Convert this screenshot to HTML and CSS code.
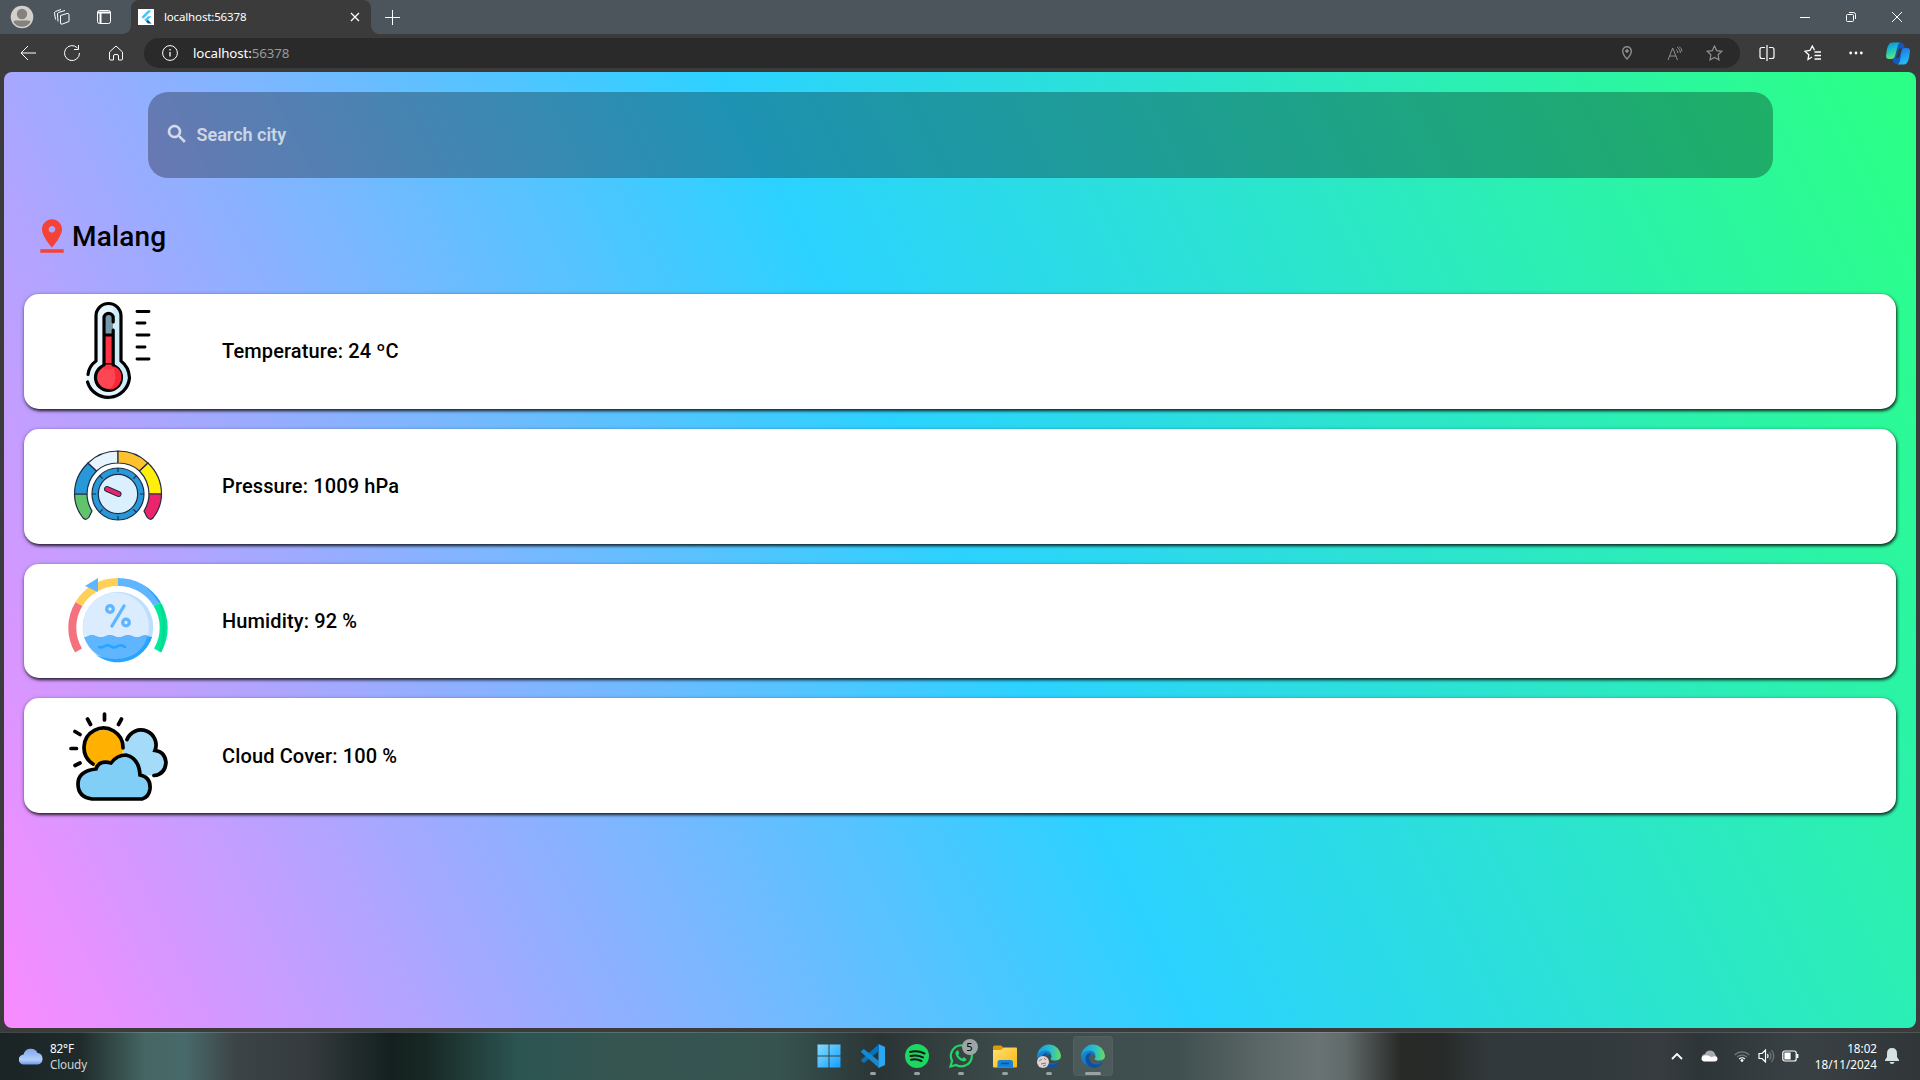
FILE: index.html
```html
<!DOCTYPE html>
<html lang="en">
<head>
<meta charset="utf-8">
<title>localhost:56378</title>
<link rel="stylesheet" href="styles.css">
</head>
<body>
<div class="titlebar">
  <div class="title-tools">
    <svg width="24" height="24" viewBox="0 0 24 24"><circle cx="12" cy="12" r="11.300" fill="#d3d0cc"/><circle cx="12" cy="9" r="5.200" fill="#86817d"/><path d="M3.500 17q0-1.500 2-1.500h13q2 0 2 1.500a10 10 0 0 1-17 0z" fill="#86817d"/></svg>
    <svg width="18" height="18" viewBox="0 0 18 18" class="line"><path d="M7.500 7.500 14 5.500q2-.5 2 1.200v6.800L9.500 16q-2 .7-2-1zM5 13.500 4.500 6q0-1 1-1.500L12 2.500M2.500 11.500 1.500 5q0-1 1-1.500L8 1.500"/></svg>
    <svg width="16" height="16" viewBox="0 0 16 16" class="line"><rect x="1.500" y="1.500" width="13" height="13" rx="2"/><path d="M1.500 3.500h13M4.500 4v10" stroke-width="2"/></svg>
  </div>
  <div class="tab">
    <svg width="16" height="16" viewBox="0 0 16 16"><path fill="#fff" d="M0 0h16v16H0z"/><path d="M3.500 8 10 1.500h3.500l-8.200 8.300zM10 7.200h3.500l-3.700 3.700-1.800-1.800z" fill="#43c4f7"/><path d="m6.200 10.800 1.800-1.800 1.800 1.800-1.800 1.800z" fill="#43c4f7"/><path d="m8 12.600 1.800-1.800 3.700 3.600H10z" fill="#075b9d"/></svg>
    <span>localhost:56378</span>
    <svg class="close line" width="10" height="10" viewBox="0 0 10 10"><path d="m1 1 8 8M9 1 1 9" stroke-width="1.300"/></svg>
  </div>
  <svg class="newtab line" width="15" height="15" viewBox="0 0 15 15"><path d="M7.500 0v15M0 7.500h15"/></svg>
  <div class="window-controls">
    <svg width="10" height="10" viewBox="0 0 10 10" class="line"><path d="M0 5.500h10"/></svg>
    <svg width="10" height="10" viewBox="0 0 10 10" class="line"><rect x=".5" y="2.500" width="7" height="7" rx="1"/><path d="M3 .5h4.500q2 0 2 2V7"/></svg>
    <svg width="10" height="10" viewBox="0 0 10 10" class="line"><path d="m0 0 10 10M10 0 0 10"/></svg>
  </div>
</div>
<div class="toolbar">
  <div class="nav">
    <svg width="16" height="16" viewBox="0 0 16 16" class="line"><path d="M16 8H1M8 1 1 8l7 7"/></svg>
    <svg width="18" height="18" viewBox="0 0 18 18" class="line"><path d="M14.500 4A7.500 7.500 0 1 0 16.500 9M15.500 1v4.500H11"/></svg>
    <svg width="16" height="16" viewBox="0 0 16 16" class="line"><path d="M1.500 7 8 1l6.500 6v7q0 1-1 1h-3v-4q0-1.500-1.500-1.500H7Q5.500 9.500 5.500 11v4h-3q-1 0-1-1z"/></svg>
  </div>
  <div class="address">
    <svg width="16" height="16" viewBox="0 0 16 16" class="line"><circle cx="8" cy="8" r="7.400"/><path d="M8 7v4.500M8 4v1.500" stroke-width="1.300"/></svg>
    <div class="url">localhost:<span>56378</span></div>
    <div class="address-actions">
      <svg width="10" height="14" viewBox="0 0 10 14" class="line dim"><path d="M5 13Q.7 8.500.7 5a4.300 4.300 0 0 1 8.600 0Q9.300 8.500 5 13z" stroke-width="1.400"/><circle cx="5" cy="5" r="1.300" fill="#8e8e8e"/></svg>
      <svg width="16" height="15" viewBox="0 0 16 15" class="line dim"><path d="m1 14 4.700-12L10.500 14M2.500 10H9M9 3.500q2 1 2 3.500M10 1q3.500 2 3.500 6M12 .5q3 2 3 5"/></svg>
      <svg width="17" height="16" viewBox="0 0 17 16" class="line dim"><path d="m8.500 1 2.200 4.600 5.100.7-3.700 3.500.9 5-4.500-2.400L4 14.800l.9-5L1.200 6.300l5.100-.7z" stroke-width="1.200"/></svg>
    </div>
  </div>
  <div class="browser-actions">
    <svg width="16" height="16" viewBox="0 0 16 16" class="line"><path d="M8 0v16M6 2.500H3q-2 0-2 2v7q0 2 2 2h3M10 2.500h3q2 0 2 2v7q0 2-2 2h-3" stroke-width="1.200"/></svg>
    <svg width="17" height="16" viewBox="0 0 17 16" class="line"><path d="m8 12-4 2.500.8-4.700L1 6.200l5-.7L8.300 1l2.200 4.300M10.500 7H17M10.500 10.500H17M10.500 14H17" stroke-width="1.300"/></svg>
    <svg width="14" height="4" viewBox="0 0 14 4" fill="#fff"><circle cx="1.700" cy="2" r="1.400"/><circle cx="7" cy="2" r="1.400"/><circle cx="12.300" cy="2" r="1.400"/></svg>
    <svg width="24" height="23" viewBox="0 0 24 23"><defs><linearGradient id="c1" x2=".3" y2="1"><stop stop-color="#1989cc"/><stop offset=".4" stop-color="#12b8d3"/><stop offset="1" stop-color="#62e47b"/></linearGradient><linearGradient id="c2" x2=".3" y2="1"><stop stop-color="#226be4"/><stop offset="1" stop-color="#22bcf5"/></linearGradient></defs><path d="M6 16q1 6 4.500 6h6L19 7q-1-6.500-4.500-6.500H9z" fill="#1558b6"/><path d="M6 .5h8.500q-2 0-3 4L9 14q-1 3-4 3H3q-3 0-3-3Q1 .5 6 .5z" fill="url(#c1)"/><path d="M18.500 6H21q3 0 3 3-1 13.500-6 13.500h-7q2 0 3-4L15.500 9q1-3 3-3z" fill="url(#c2)"/><path d="m10 16 3-9.500h3L13 16z" fill="#3a3a3a"/></svg>
  </div>
</div>
<main class="viewport">
  <div class="search">
    <svg width="24" height="24" viewBox="0 0 24 24" fill="currentColor" stroke="currentColor" stroke-width=".6"><path d="M15.500 14h-.79l-.28-.27A6.470 6.470 0 0 0 16 9.500 6.500 6.500 0 1 0 9.500 16c1.610 0 3.090-.59 4.230-1.570l.27.28v.79l5 4.990L20.490 19zm-6 0C7.010 14 5 11.990 5 9.500S7.010 5 9.500 5 14 7.010 14 9.500 11.990 14 9.500 14z"/></svg>
    <span>Search city</span>
  </div>
  <h1 class="city">
    <svg width="40" height="40" viewBox="0 0 24 24" fill="#f44336"><path d="M18 8c0-3.310-2.690-6-6-6S6 4.690 6 8c0 4.500 6 11 6 11s6-6.500 6-11zm-8 0c0-1.100.9-2 2-2s2 .9 2 2-.89 2-2 2a2 2 0 0 1-2-2zM5 20v2h14v-2z"/></svg>
    <span>Malang</span>
  </h1>
  <div class="cards">
    <section class="card">
      <svg width="100" height="100" viewBox="0 0 100 100" fill="none" stroke="#000" stroke-width="3.200" stroke-linecap="round">
        <path d="M27 60.500V15a13.300 13.300 0 0 1 26.600 0V60.500A21.500 21.500 0 1 1 27 60.500z" fill="#e6f5fe" stroke="none"/>
        <path d="M45 3q8 3 8 14v44q12 9 8 22-4 10-14 13 10-12 4-24l-5-8z" fill="#cdedfb" stroke="none"/>
        <path d="M20 73.500Q21 65 28 60V15a12.500 12.500 0 0 1 25 0v45Q61 66 61.500 77A21.500 21.500 0 0 1 19.500 81"/>
        <path d="M35.800 32h9.400v36h-9.400z" fill="#ff3345" stroke="none"/><path d="M36 33V17q0-4.500 4.500-4.500T45 17v16z" fill="#7899a9" stroke="none"/>
        <circle cx="40.500" cy="76.500" r="13" fill="#fd4653"/><path d="M45 65q10 3 8 14-2 9-12 10 10-8 4-24z" fill="#fb2538" stroke="none"/>
        <path d="M38 66h5" stroke="#fd3546" stroke-width="5"/><path d="M36 64V17a4.600 4.600 0 0 1 9.200 0v4M45.200 29v35M36 34h9" />
        <path d="M69 10.500h12M69 22h8M69 34h12M69 46h8M69 58h12" stroke-width="2.900"/>
      </svg>
      <span>Temperature: 24 ºC</span>
    </section>
    <section class="card">
      <svg width="100" height="100" viewBox="0 0 100 100" fill="none">
        <g stroke="#202d44" stroke-width="1.200" stroke-linejoin="round">
          <path d="M6.500 58H19q0 9 5 17l-3 6q-3 4-6 1-8.500-11-8.500-24z" fill="#61c36b"/>
          <path d="M6.500 58q0-18 13.500-31l8.500 8Q19 45 19 58z" fill="#2798d9"/>
          <path d="M20 27Q32 15 50 15v12q-13 0-21.500 8z" fill="#e7f3fd"/>
          <path d="M50 15q18 0 30 12l-8.500 8Q63 27 50 27z" fill="#ffc12e"/>
          <path d="M80 27q13.500 13 13.500 31H81q0-13-9.500-23z" fill="#ffef0b"/>
          <path d="M81 58h12.500q0 13-8.500 24-3 3-6-1l-3-6q5-8 5-17z" fill="#eb246c"/>
          <circle cx="50" cy="58" r="26" fill="#2798d9"/><circle cx="50" cy="58" r="19.700" fill="#daf0ff"/>
          <path d="M50 32v4M50 80v4M24 58h4M72 58h4M31.600 39.600l3 3M65.400 73.400l3 3M31.600 76.400l3-3M65.400 42.600l3-3"/>
        </g>
        <path d="m39 53 11.500 5" stroke="#202d44" stroke-width="6" stroke-linecap="round"/><path d="m39 53 11.500 5" stroke="#eb246c" stroke-width="4" stroke-linecap="round"/>
      </svg>
      <span>Pressure: 1009 hPa</span>
    </section>
    <section class="card">
      <svg width="100" height="100" viewBox="0 0 100 100" fill="none">
        <g stroke-width="8"><path d="M10.500 79.500A45 45 0 0 1 11 33" stroke="#f3727e"/><path d="M11 33A45 45 0 0 1 50 11" stroke="#ffcf57"/><path d="M50 11a45 45 0 0 1 39 22" stroke="#60b5ff"/><path d="M89 33a45 45 0 0 1 .5 46.500" stroke="#03e99b"/></g>
        <path d="M76 14.500Q86 21 92.500 31L91 32Q85 22 76 14.500z" fill="#28a3ff"/><path d="M94 33q7 23-.500 48l-2-1q6-22 .5-46z" fill="#06d990"/>
        <circle cx="50" cy="56" r="35.300" fill="#bddfff"/><ellipse cx="48" cy="56" rx="33" ry="34.500" fill="#dbecff"/>
        <path d="M16 66c4 0 4-2 8-2s4 2 9 2 4-2 9-2 4 2 9 2 4-2 9-2 4 2 9 2 4-2 9-2l6 2A36 36 0 0 1 16 66z" fill="#60b5ff"/>
        <path d="M79 66h5A36 36 0 0 1 28 84q14 6 29 3 18-5 22-21z" fill="#28a3ff"/>
        <path d="M31 76q3 1 6-1 3-2 7 1 3 1 6-1 3-2 7 1" stroke="#28a3ff" stroke-width="2.600" stroke-linecap="round"/>
        <path d="m17 15 13-8v14z" fill="#60b5ff"/><g stroke="#60b5ff" stroke-width="3.300" stroke-linecap="round"><path d="M56 35 44 55"/><circle cx="42" cy="38" r="3.300"/><circle cx="58" cy="51.500" r="3.300"/></g>
      </svg>
      <span>Humidity: 92 %</span>
    </section>
    <section class="card">
      <svg width="100" height="100" viewBox="0 0 100 100" fill="none" stroke="#000" stroke-width="3.700" stroke-linecap="round">
        <path d="M59 33.500a15 15 0 0 1 28 11q10 1 11 12-1 12-12 13H70L55 53V38z" fill="#a3dbf8" stroke="none"/><path d="M59 33.500a15 15 0 0 1 28 11q10 1 11 12-1 12-12 13"/>
        <path d="M25 60a19.500 19.500 0 1 1 30-17l-1 8-19 14z" fill="#ffb000" stroke="none"/><path d="M25 58a19.500 19.500 0 1 1 30-16"/>
        <path d="M36.500 8v6M19.500 13l3 5.500M53.500 13l-3 5.500M7 25.500l5 3M3 42.500h5.500M7 59.500l5-2.500"/>
        <path d="M24 93q-14-2-14-15 0-13 18-15 3-9 15-6 6-8 15-8 13 3 14 20 11 2 10 14-1 8-8 10z" fill="#81cef6"/>
      </svg>
      <span>Cloud Cover: 100 %</span>
    </section>
  </div>
</main>
<footer class="taskbar">
  <div class="weather">
    <svg width="24" height="19" viewBox="0 0 24 19"><defs><linearGradient id="w" x2="0" y2="1"><stop stop-color="#7fa7f3"/><stop offset=".7" stop-color="#b3cff9"/><stop offset="1" stop-color="#6b9bee"/></linearGradient></defs><path d="M5 18.500a5 5 0 0 1-.5-10 7.500 7.500 0 0 1 14-1.500 5.800 5.800 0 0 1 0 11.500z" fill="url(#w)"/></svg>
    <div><div>82°F</div><div class="muted">Cloudy</div></div>
  </div>
  <div class="apps">
    <div class="app"><svg width="24" height="24" viewBox="0 0 24 24"><defs><linearGradient id="win" x2="1" y2="1"><stop stop-color="#86dcff"/><stop offset="1" stop-color="#159eff"/></linearGradient></defs><path d="M.5.500h11v11H.5zM12.500.500h11v11h-11zM.5 12.500h11v11H.5zM12.500 12.500h11v11h-11z" fill="url(#win)"/></svg></div>
    <div class="app running"><svg width="24" height="24" viewBox="0 0 24 24"><path d="M17.500 0 24 3v18l-6.500 3z" fill="#2ba7f2"/><path d="M18 0 .5 15.500q-.8 1 0 1.700L2 18.500q.8.500 1.500 0L18 7z" fill="#0873bd"/><path d="M18 24 .5 8.500q-.8-1 0-1.700L2 5.500q.8-.5 1.500 0L18 17z" fill="#1689d2"/></svg></div>
    <div class="app running"><svg width="24" height="24" viewBox="0 0 24 24"><circle cx="12" cy="12" r="12" fill="#1ed760"/><path d="M5 8q7.500-2.200 14.500 1.500M5.500 12q6.500-1.700 12.500 1.400M6 15.700q5.500-1.200 10.500 1.300" fill="none" stroke="#111c18" stroke-width="2" stroke-linecap="round"/></svg></div>
    <div class="app running"><svg width="24" height="24" viewBox="0 0 24 24"><path d="m1.500 22.500 1.600-5.700A10.500 10.500 0 1 1 7.200 21z" fill="none" stroke="#25d366" stroke-width="2.200"/><path d="M8 6.500q-2 1.200-1.500 3.500 2 6 8 7.500 2.500.2 3-2.200-1-1.500-3-2l-1.300 1.400q-2.700-1-4-3.700l1-1.500L9.300 6.500z" fill="#25d366"/></svg><span class="badge">5</span></div>
    <div class="app running"><svg width="24" height="24" viewBox="0 0 24 24"><defs><linearGradient id="f" x2="1" y2="1"><stop stop-color="#ffdf77"/><stop offset="1" stop-color="#fbb80d"/></linearGradient></defs><path d="M0 10V3q0-1.500 1.500-1.500H8L11 4v6z" fill="#e09b00"/><path d="M0 6h8l3-2.500h12q1 0 1 1v18q0 1-1 1H1q-1 0-1-1z" fill="url(#f)"/><path d="M4.500 23.500v-5q0-2.500 2.500-2.500h10.500q2.500 0 2.500 2.500v5z" fill="#1683d6"/><path d="M8 19.500h8" stroke="#0a529b" stroke-width="1.500"/></svg></div>
    <div class="app running"><svg width="24" height="24" viewBox="0 0 24 24"><use href="#edge"/><circle cx="6" cy="18" r="6" fill="#ded5d2"/><path d="m2 17 3-2M7 14l2 2M4 20l5-1M6 22l3-1" stroke="#8b7370" fill="none"/></svg></div>
    <div class="app running active"><svg width="24" height="24" viewBox="0 0 24 24"><defs><linearGradient id="e1" x2="1"><stop stop-color="#199bdc"/><stop offset=".55" stop-color="#28bdce"/><stop offset="1" stop-color="#67de5a"/></linearGradient><linearGradient id="e2" x2="1" y2="1"><stop stop-color="#168bd5"/><stop offset="1" stop-color="#1262b6"/></linearGradient></defs><g id="edge"><path d="M.3 10A12 12 0 0 1 24 11.500q0 5-6 5-4.500 0-4.500-2 1.500-1 .8-3-1.300-3-5.300-3-5.500 0-8.700 5z" fill="url(#e1)"/><path d="M0 13q2-6.500 8.500-6.500 4.500 0 6 4-6.500-1-6 4 .5 5 6.500 5 4 0 7-2A12 12 0 0 1 0 13z" fill="url(#e2)"/><path d="M4.500 13Q6 8.500 11 9q-3 2-2.500 6 1 6 8.500 5.500l5-2.500q-4 6-9.500 6Q4 22.500 4.500 13z" fill="#0e519e"/></g></svg></div>
  </div>
  <div class="tray">
    <svg class="chevron" width="12" height="8" viewBox="0 0 12 8" fill="none" stroke="#fff" stroke-width="1.800"><path d="m1 7 5-5 5 5"/></svg>
    <svg class="drive" width="17" height="12" viewBox="0 0 17 12"><path d="M1 9Q0 4.500 4 4 5 .5 9 .5q4 0 5 3.500l2 4z" fill="#aaa"/><path d="M3.500 11.500q-3-.5-3-3t3-3Q7 4.500 10 7l4-.8q2.500 0 2.500 2.600t-3 2.700z" fill="#fff"/></svg>
    <svg class="wifi" width="16" height="12" viewBox="0 0 16 12" fill="none" stroke="#fff"><path d="M.7 5a10 10 0 0 1 14.600 0M3 7.200a7 7 0 0 1 10 0" stroke="#777" stroke-width="1.200"/><path d="M5.200 9a4 4 0 0 1 5.600 0" stroke-width="1.300"/><circle cx="8" cy="10.500" r="1" fill="#fff"/></svg>
    <svg class="sound" width="17" height="14" viewBox="0 0 17 14" fill="none" stroke="#fff" stroke-width="1.200"><path d="M1 4.500h3L7.500 1v12L4 9.500H1zM9.500 5q1 2 0 4"/><path d="M11.500 3q3 4 0 8M13.500 1q4.500 6 0 12" stroke="#777"/></svg>
    <svg class="battery" width="17" height="12" viewBox="0 0 17 12" fill="none" stroke="#fff" stroke-width="1.200"><rect x=".8" y="1" width="13.400" height="10" rx="2"/><path d="M3 3h5v6H3z" fill="#fff"/><path d="M15.500 4v4" stroke-width="1.800"/></svg>
    <div class="clock"><div>18:02</div><div>18/11/2024</div></div>
    <svg width="14" height="16" viewBox="0 0 14 16" fill="#d5e1e4"><path d="M7 0q5 0 5 5.500V9l2 3v1H0v-1l2-3V5.500Q2 0 7 0zM4.500 14h5q-.5 2-2.500 2t-2.500-2z"/></svg>
  </div>
</footer>
</body>
</html>
```

FILE: styles.css
```css
* { box-sizing: border-box; }
body {
  margin: 0;
  width: 1920px;
  height: 1080px;
  display: flex;
  flex-direction: column;
  overflow: hidden;
  background: #3b3b3b;
  color: #fff;
  font-family: "Noto Sans", sans-serif;
}
svg { display: block; flex: none; }
.line { fill: none; stroke: #fff; stroke-width: 1; }
.dim { stroke: #8e8e8e; }

.titlebar { height: 34px; display: flex; align-items: center; background: #4c555b; }
.title-tools { width: 131px; padding-left: 10px; display: flex; align-items: center; gap: 19px; }
.title-tools svg:last-child { margin-left: 6px; }
.tab {
  position: relative;
  width: 240px;
  height: 34px;
  padding: 0 11px 0 7px;
  display: flex;
  align-items: center;
  border-radius: 8px 8px 0 0;
  background: #3b3b3b;
  font-size: 11.500px;
  letter-spacing: -.15px;
}
.tab::before, .tab::after {
  content: "";
  position: absolute;
  bottom: 0;
  width: 8px;
  height: 8px;
}
.tab::before { left: -8px; background: radial-gradient(circle at 0 0, transparent 7.500px, #3b3b3b 8px); }
.tab::after { right: -8px; background: radial-gradient(circle at 100% 0, transparent 7.500px, #3b3b3b 8px); }
.tab span { margin-left: 10px; padding-bottom: 2px; }
.close { margin-left: auto; }
.newtab { margin-left: 14px; }
.window-controls { margin-left: auto; padding-right: 18px; display: flex; gap: 36px; }

.toolbar { height: 38px; display: flex; align-items: center; background: #3b3b3b; }
.nav { width: 144px; padding-left: 20px; display: flex; align-items: center; gap: 27px; }
.address {
  width: 1596px;
  height: 30px;
  padding: 0 17px 0 18px;
  display: flex;
  align-items: center;
  border-radius: 15px;
  background: #2a2a2a;
}
.url { margin-left: 15px; font-size: 13.300px; letter-spacing: -.1px; }
.url span { color: #999; }
.address-actions { margin-left: auto; display: flex; align-items: center; gap: 35px; }
.address-actions svg:last-child { margin-left: -12px; }
.browser-actions { margin-left: 19px; display: flex; align-items: center; gap: 28.500px; }
.browser-actions svg:last-child { margin-left: -6px; }

.viewport {
  height: 956px;
  margin: 0 4px;
  padding-top: 20px;
  border-radius: 8px;
  background: linear-gradient(63.435deg, #fa8bff 0%, #2bd2ff 50%, #2bff88 98%);
  color: #000;
  font-family: Roboto, sans-serif;
}
.search {
  width: 1625px;
  height: 86px;
  margin: 0 auto;
  padding: 0 0 2px 17px;
  display: flex;
  align-items: center;
  gap: 8px;
  border-radius: 20px;
  background: rgba(0, 0, 0, .3);
  color: rgba(255, 255, 255, .7);
  font-size: 18px;
  font-weight: 600;
}
.city {
  height: 40px;
  margin: 38px 0 0 28px;
  display: flex;
  align-items: center;
  font-size: 28px;
  font-weight: 500;
  letter-spacing: .15px;
}
.cards { margin: 38px 20px 0; display: flex; flex-direction: column; gap: 20px; }
.card {
  height: 114.800px;
  padding-left: 44px;
  display: flex;
  align-items: center;
  gap: 54px;
  border-radius: 15px;
  background: #fff;
  box-shadow: 1px 2px 3px rgba(0, 0, 0, .7), 0 1px 4px rgba(0, 0, 0, .35);
  font-size: 20px;
  font-weight: 500;
  letter-spacing: .13px;
}

.taskbar {
  position: relative;
  height: 48px;
  margin-top: 4px;
  display: flex;
  align-items: center;
  justify-content: center;
  padding: 0 0 2px 1px;
  border-top: 1px solid rgba(255, 255, 255, .16);
  background: linear-gradient(90deg, #1b2424 0, #1f2b2b 80px, #456663 145px, #48696a 185px, #3c4447 235px, #343a3d 310px, #14201f 390px, #172824 425px, #2c5552 520px, #365551 620px, #365350 780px, #2b3434 880px, #3c4a4a 1000px, #405050 1180px, #5b6666 1260px, #697374 1320px, #626b6b 1345px, #292b29 1400px, #262927 1440px, #31383b 1485px, #333a3d 1600px, #363c3f 1660px, #2e3538 1700px, #3a4144 1800px, #303538 1920px);
  font-size: 11.700px;
  line-height: 16px;
}
.weather { position: absolute; left: 19px; display: flex; align-items: center; gap: 7px; letter-spacing: -.15px; }
.muted { color: #d2d6d6; }
.apps { display: flex; gap: 4px; }
.app { position: relative; width: 40px; height: 40px; display: grid; place-items: center; border-radius: 4px; }
.running::after {
  content: "";
  position: absolute;
  bottom: 1px;
  left: 17px;
  width: 6px;
  height: 3px;
  border-radius: 2px;
  background: #9ba2a2;
}
.active { background: rgba(255, 255, 255, .08); box-shadow: inset 0 0 0 1px rgba(255, 255, 255, .04); }
.active::after { left: 12px; width: 16px; }
.badge {
  position: absolute;
  right: 3px;
  top: 3px;
  width: 16px;
  height: 16px;
  border-radius: 50%;
  background: #9da5a7;
  color: #000;
  font-size: 11px;
  line-height: 16px;
  text-align: center;
}
.tray { position: absolute; right: 21px; display: flex; align-items: center; }
.drive { margin-left: 18px; }
.wifi { margin-left: 16px; }
.sound { margin-left: 8px; }
.battery { margin-left: 7px; }
.clock { margin: 0 8px 0 16px; font-size: 11.700px; text-align: right; }
```
